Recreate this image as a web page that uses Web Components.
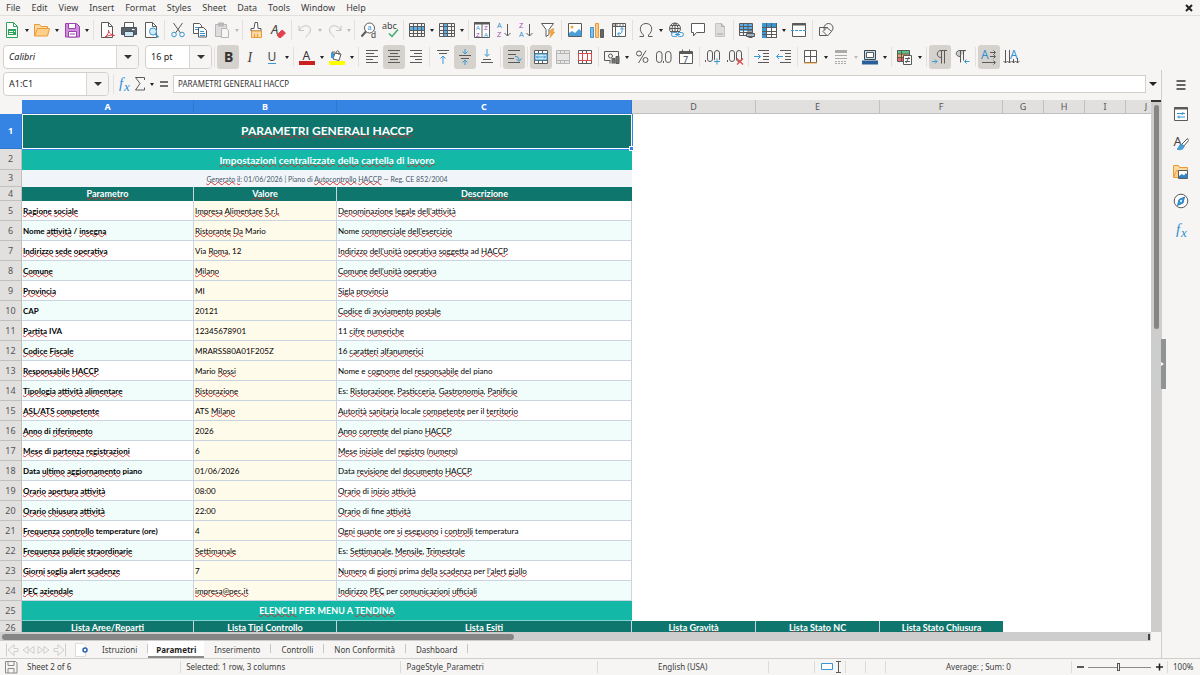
<!DOCTYPE html>
<html lang="it">
<head>
<meta charset="utf-8">
<title>Parametri HACCP</title>
<style>
  html, body { margin: 0; height: 100%; }
  body { font-family: "Noto Sans", sans-serif; font-size: 9px; color: #3d3d3d; background: #f6f5f4; overflow: hidden; }
</style>
</head>
<body>
<calc-window></calc-window>

<script>
/* ---------- icons (16 x 16) ---------- */
const T = (x, y, s, c, t, extra = '') => `<text x="${x}" y="${y}" font-size="${s}" fill="${c}" stroke="none" ${extra}>${t}</text>`;
const SANS = 'font-family="Liberation Sans"';
const GRID = '<path d="M.5 1.5h15v13h-15zM.5 4.5h15M.5 8.5h15M.5 11.5h15M4.5 1.5v13M8.5 1.5v13M12.5 1.5v13"/>';
const BLUE = '#2f8fd0';
const ICONS = {
  new: '<path d="M2.5.5h7l4 4v11h-11z" fill="#fff" stroke="#2fa35b"/><path d="M9.5.5v4h4" stroke="#2fa35b"/><path d="M4 7h8v6h-8z" fill="#2fa35b" stroke="none"/><path d="M5 9.5h4M5 11.5h4M10 9.5h1" stroke="#fff"/>',
  open: '<path d="M.5 13.5v-11h5l1.500 2h6.500v3" fill="#fbd9a3" stroke="#eb9b35"/><path d="M.5 14l3-7.500h12l-2 7.500z" fill="#fdcf8b" stroke="#eb9b35"/>',
  save: '<path d="M1.500 1.500h11l3 3v10.500h-14z" fill="#cf8ddb" stroke="#9b44b0"/><path d="M4.500 1.500h7v5h-7zM4.500 9.500h8v5.500h-8z" fill="#fff" stroke="#9b44b0"/><path d="M6 12h5" stroke="#9b44b0"/>',
  pdf: '<path d="M2.500.5h7l4 4v11h-11z" fill="#fff"/><path d="M9.500.5v4h4"/><path d="M6 15c3-2 4-5 3.500-7 0 3 3 5 6 5.500-3-1-6 0-9.500 1.500z" stroke="#dc3b4a"/>',
  print: '<path d="M3.500.5h9v5h-9z" fill="#fff"/><path d="M.5 5.500h15v7h-15z" fill="#58636e" stroke="#4a545e"/><path d="M3.500 9.500h9v5h-9z" fill="#cfe6f6" stroke="#4a545e"/><path d="M11 7.500h2.500" stroke="#fff"/>',
  preview: '<path d="M2.500.5h7l4 4v11h-11z" fill="#fff"/><path d="M9.500.5v4h4"/><circle cx="10" cy="9.500" r="3.500" fill="#d4ebfa" stroke="#3b97d3"/><path d="M12.500 12l3 3.500" stroke="#3b97d3" stroke-width="1.500"/>',
  cut: '<path d="M3.500 1l7 10M12.500 1l-7 10"/><circle cx="4" cy="12.500" r="2.300" stroke="#3b97d3"/><circle cx="12" cy="12.500" r="2.300" stroke="#3b97d3"/>',
  copy: '<path d="M1.500 1.500h6l2 2v8h-8z" fill="#fff"/><path d="M3 5.500h4M3 7.500h3" stroke="#3b97d3"/><path d="M6.500 5.500h5l3 3v6.500h-8z" fill="#fff"/><path d="M8 9.500h4M8 11.500h5M8 13.500h5" stroke="#3b97d3"/>',
  paste: '<path d="M1.500 2.500h11v12h-11z" fill="#ddd" stroke="#b5b5b5"/><path d="M4.500 1h5v3h-5z" fill="#bbb" stroke="#b5b5b5"/><path d="M7.500 6.500h5l2 2v7h-7z" fill="#f6f5f4" stroke="#b5b5b5"/>',
  clone: '<path d="M7 .5h2.500l.5 6h3v2.500h-10v-2.500h3z" fill="#fff"/><path d="M3.500 9v6.500h10v-6.500z" fill="#fbd9a3" stroke="#eb9b35"/><path d="M6.500 12v3M9.500 12v3" stroke="#eb9b35"/>',
  clear: T(1, 12, 13, '#444', 'A', 'font-style="italic"') + '<path d="M7 13l5-5 3.500 3-4.500 4.500h-2z" fill="#e0434f" stroke="#e0434f"/>',
  undo: '<path d="M2 3.500v5h5M2.500 8c3-6 11-5.500 11 0 0 3-3 5-5 7" stroke="#c4c4c4"/>',
  redo: '<path d="M15 3.500v5h-5M14.500 8c-3-6-11-5.500-11 0 0 3 3 5 5 7" stroke="#c4c4c4"/>',
  find: '<circle cx="9.500" cy="6" r="5" fill="#fff"/><path d="M6 9.500l-4.500 5" stroke-width="2"/>' + T(7.500, 7.500, 7, BLUE, 'a', SANS) + T(11, 15.500, 9, '#444', 'd', SANS),
  spell: T(0, 7, 9, '#444', 'abc') + '<path d="M7 11.500l3 3 6-7" stroke="#3bab6a" stroke-width="1.500"/>',
  row: '<path d="M1 5h14v4h-14z" fill="#5ab0ea" stroke="none"/>' + GRID,
  col: '<path d="M5 2h4v12h-4z" fill="#5ab0ea" stroke="none"/>' + GRID,
  sort: '<path d="M.5.5h15v15h-15zM8 1v15" fill="#fff"/><path d="M0 1.500h16" stroke-width="2"/>' + T(2, 8, 6, BLUE, 'A', SANS) + T(2, 15, 6, '#a347ba', 'Z', SANS) + T(10, 8, 6, '#a347ba', 'Z', SANS) + T(10, 15, 6, BLUE, 'A', SANS),
  asc: T(1, 6, 7, BLUE, 'A', SANS) + T(1, 15, 7, '#a347ba', 'Z', SANS) + '<path d="M11.500 2v12M8.500 11l3 3 3-3"/>',
  desc: T(1, 6, 7, '#a347ba', 'Z', SANS) + T(1, 15, 7, BLUE, 'A', SANS) + '<path d="M11.500 2v12M8.500 11l3 3 3-3"/>',
  filter: '<path d="M1.500 1.500h12l-4.500 6v5l-3 2v-7z" fill="#fff"/><path d="M12 7l-3 4h2.500l-1.500 4.500 4.500-5.500h-2.500l2-3z" fill="#f5a545" stroke="#eb9b35"/>',
  image: '<path d="M1.500 1.500h13v13h-13z" fill="#fff"/><path d="M2 14v-3l3-2 3 2 4-4 2.500 2.500v4.500z" fill="#4a9fdb" stroke="none"/><circle cx="5" cy="5" r="1.500" fill="#f5a545" stroke="none"/>',
  chart: '<path d="M1.500 5.500h3v10h-3z" fill="#83bfe9" stroke="#3b97d3"/><path d="M6.500 1.500h3v14h-3z" fill="#fbc887" stroke="#eb9b35"/><path d="M11.500 7.500h3v8h-3z" fill="#666"/>',
  pivot: '<path d="M1.500 1.500h13v13h-13zM1.500 4.500h13M4.500 1.500v13" fill="#fff"/><path d="M2 3h12" stroke="#777" stroke-dasharray="2 1"/><path d="M11 6v3c0 2-1 3-4 3M9.500 7.500l1.500-2 2 2M8.500 10l-2 2 2 2" stroke="#3b97d3"/>',
  omega: '<path d="M1.500 14.500h4v-1.500c-5-4-4-11.500 2.500-11.500s7.500 7.500 2.500 11.500v1.500h4"/>',
  link: '<circle cx="7" cy="6.500" r="5.500"/><path d="M1.500 6.500h11M7 1v11M3 3.500h8M3 9.500h8M7 1c-4 4-4 7 0 11M7 1c4 4 4 7 0 11"/><rect x="3.500" y="10.500" width="6" height="4" rx="2" stroke="#3b97d3" fill="#f6f5f4"/><rect x="9.500" y="10.500" width="6" height="4" rx="2" stroke="#3b97d3" fill="#f6f5f4"/><path d="M7 12.500h5" stroke="#3b97d3"/>',
  comment: '<path d="M1.500 1.500h13v9h-8l-3 3.500v-3.500h-2z" fill="#fff"/>',
  header: '<path d="M3.500 1.500h6l3 3v10h-9z" fill="#ddd" stroke="#c4c4c4"/><path d="M9.500 1.500v3h3M5 12h6" stroke="#aaa"/>',
  parea: '<path d="M1 2h12v7h-12z" fill="#5ab0ea" stroke="none"/><path d="M.5 1.500h13v12h-13zM.5 4.500h13M.5 7.500h13M.5 10.500h13M4.500 1.500v12M9 1.500v12"/><path d="M7.500 11.500h8v3h-8z" fill="#9cb4c6"/><path d="M9.500 9h4v2M9.500 15.500h4" />',
  freeze: '<path d="M1.500 1.500h14v14h-14z" fill="#fff"/><path d="M1 1h4v15h-4zM1 1h14v4h-14z" fill="#3b97d3" stroke="none"/><path d="M5.500 1v15M10.500 1v15M1 5.500h14M1 9.500h14M1 12.500h14M15.500 1v15"/>',
  split: '<path d="M1.500 1.500h13v13h-13z" fill="#fff"/><path d="M1 2.500h14" stroke-width="2"/><path d="M0 8.500h16" stroke="#3b97d3" stroke-dasharray="3 1"/>',
  shapes: '<path d="M1.500 5.500h8v8h-8z"/><circle cx="10.500" cy="6" r="4.500"/><path d="M5 9.500l4-4 4.500 4-4 4.500z" fill="#f6f5f4"/>',
  bold: T(4, 13, 14, '#333', 'B', 'font-weight="700"'),
  italic: T(5.500, 13, 14, '#444', 'I', 'font-style="italic" font-family="Liberation Serif"'),
  underline: T(3.500, 12, 12, '#444', 'U') + '<path d="M4 14.500h8" stroke="#3b97d3"/>',
  color: T(3.500, 10.500, 12, '#333', 'A') + '<path d="M0 14h16" stroke="#c9211e" stroke-width="4"/>',
  mark: '<path d="M6 4l6 1-2 6.500-6-1.500z" fill="#fff"/><path d="M7 5c0-5 4-4 3 1M3 9v-6h3" /><path d="M2 4h3v5h-3z" fill="#3b97d3" stroke="none"/><path d="M0 14h16" stroke="#ff0" stroke-width="4"/>',
  left: '<path d="M2 1.500h12M2 4.500h8M2 7.500h12M2 10.500h7M2 13.500h12"/>',
  center: '<path d="M2 1.500h12M4 4.500h8M2 7.500h12M4 10.500h8M2 13.500h12"/>',
  right: '<path d="M2 1.500h12M6 4.500h8M2 7.500h12M7 10.500h7M2 13.500h12"/>',
  top: '<path d="M2 1.500h12M4 4.500h8"/><path d="M8 15v-8M5.500 9.500l2.500-2.500 2.500 2.500" stroke="#3b97d3"/>',
  middle: '<path d="M2 6.500h12M4 9.500h8"/><path d="M8 0v4.500M5.500 2.500l2.500 2.500 2.500-2.500M8 16v-4.500M5.500 13.500l2.500-2.500 2.500 2.500" stroke="#3b97d3"/>',
  bottom: '<path d="M2 13.500h12M4 10.500h8"/><path d="M8 0v7M5.500 5l2.500 2.500 2.500-2.500" stroke="#3b97d3"/>',
  wrap: '<path d="M2 1.500h12M2 5.500h8M2 9.500h6M2 13.500h12"/><path d="M9 7.500c3 0 4 1 4 4M10.500 10l2.500 2.500 2.500-3" stroke="#3b97d3"/>',
  merge: '<path d="M1.500 1.500h13v13h-13zM1.500 4.500h13M1.500 11.500h13M5.500 1.500v3M9.500 1.500v3M5.500 11.500v3M9.500 11.500v3" fill="#fff"/><path d="M2 5h12v6h-12z" fill="#d5ebfa" stroke="#3b97d3"/><path d="M3.500 8h9M5 6.500l-1.500 1.500 1.500 1.500M11 6.500l1.500 1.500-1.500 1.500" stroke="#3b97d3"/>',
  mergecells: '<path d="M1.500 1.500h13v13h-13zM1.500 4.500h13M1.500 11.500h13M5.500 1.500v3M9.500 1.500v3M5.500 11.500v3M9.500 11.500v3" stroke="#b5b5b5" fill="#e6e6e6"/>',
  unmerge: '<path d="M1.500 1.500h13v13h-13zM1.500 4.500h13M1.500 11.500h13M5.500 1.500v3M9.500 1.500v3M5.500 11.500v3M9.500 11.500v3" fill="#fff"/><path d="M1.500 4.500h13v7h-13zM5.500 4.500v7M10.500 4.500v7" stroke="#e04848"/>',
  currency: '<path d="M14.500 7v-4.500h-14v9h6"/><circle cx="6.500" cy="7" r="2"/><path d="M6 14.500v-3M8 14.500v-5h3v5M12 14.500v-7h3v7z" fill="#777"/>',
  percent: '<circle cx="5" cy="4.500" r="2.500"/><circle cx="11.500" cy="11" r="2.500"/><path d="M12 1.500l-7.500 12.500"/>',
  number: '<rect x=".5" y="2.500" width="5.500" height="11" rx="2.700"/><rect x="9.500" y="2.500" width="5.500" height="11" rx="2.700"/><path d="M7.500 12v2"/>',
  date: '<path d="M1.500 2.500h13v12h-13zM4.500.5v3M11.500.5v3" fill="#fff"/><path d="M1.500 4h13" stroke-width="2"/>' + T(5, 13.500, 9, '#444', '7'),
  adddec: '<rect x="2.500" y="1.500" width="5" height="11" rx="2.500"/><rect x="9.500" y="1.500" width="5" height="11" rx="2.500"/><path d="M.5 11v2"/><path d="M12 9v7M9 12.500h6.500" stroke="#f6f5f4" stroke-width="3"/><path d="M12 9.500v6M9 12.500h6" stroke="#3b97d3"/>',
  deldec: '<rect x="2.500" y="1.500" width="5" height="11" rx="2.500"/><rect x="9.500" y="1.500" width="5" height="11" rx="2.500"/><path d="M.5 11v2"/><path d="M10 9.500l6 6M16 9.500l-6 6" stroke="#e04848" stroke-width="1.200"/>',
  indent: '<path d="M4 1.500h11M9 4.500h6M9 7.500h6M9 10.500h6M4 13.500h11"/><path d="M0 7.500h6M4 5l2.500 2.500-2.500 2.500" stroke="#3b97d3"/>',
  outdent: '<path d="M4 1.500h11M9 4.500h6M9 7.500h6M9 10.500h6M4 13.500h11"/><path d="M1 7.500h6M3 5l-2.500 2.500 2.500 2.500" stroke="#3b97d3"/>',
  borders: '<path d="M1.500 1.500h12v12h-12zM7.500 1.500v12M1.500 7.500h12" fill="#fff"/><path d="M1 14h13" stroke="#eb9b35"/>',
  bstyle: '<path d="M2 2.500h12" stroke="#aaa" stroke-width="3"/><path d="M2 6.500h12M2 9.500h12" stroke="#aaa"/><path d="M2 12.500h12M2 14.500h12" stroke="#aaa" stroke-dasharray="2 1"/>',
  bcolor: '<path d="M2.500 1.500h11v9h-11z" fill="#b9def6" stroke="#444"/><path d="M4.500 3.500h7v5h-7z" fill="#fff"/><path d="M0 13.500h16" stroke="#2a6099" stroke-width="4"/>',
  cond: '<path d="M.5 1.500h12v11h-12z" fill="#fff"/><path d="M1 2h11v3h-11z" fill="#57c584" stroke="none"/><path d="M1 5h11v3h-11z" fill="#f2a65a" stroke="none"/><path d="M1 8h11v4h-11z" fill="#e66" stroke="none"/><path d="M.5 1.500h12M.5 5h12M.5 8.500h12M4.500 1.500v11"/><path d="M6.500 6.500h8v9h-8z" fill="#fff"/><path d="M8 9.500h5M8 12.500h5M12 8l-3 6"/>',
  ltr: '<path d="M15 1.500h-6c-5 0-5 7 0 7M9.500 1.500v13M12.500 1.500v13"/><path d="M0 12.500h5M3 10.500l2 2-2 2" stroke="#3b97d3"/>',
  rtl: '<path d="M12 1.500h-6c-5 0-5 6 0 6M6.500 1.500v12M9.500 1.500v10" fill="#ccc"/><path d="M15.500 12.500h-5M12.500 10.500l-2 2 2 2" stroke="#3b97d3"/>',
  dirh: T(0, 10, 12, BLUE, 'A') + '<path d="M9 3.500h5M9 7.500h5M1 13.500h13M12.500 1.500l2 2-2 2M12.500 5.500l2 2-2 2M12.500 11.500l2 2-2 2"/>',
  dirv: T(7, 10, 12, BLUE, 'A') + '<path d="M2.500 1v13M6.500 1v13M14.500 9v5M10.500 10v4M.5 12l2 2 2-2M4.500 12l2 2 2-2M9 12l1.500 2 2-2M12.500 12l2 2 2-2"/>',
  fx: T(3, 12, 15, BLUE, 'f', 'font-style="italic" font-family="Liberation Serif"') + T(8, 14.500, 13, BLUE, 'x', 'font-style="italic" font-family="Liberation Serif"'),
  sum: '<path d="M12.500 4v-2.500h-9l4.500 6-4.500 6.500h9v-2.500"/>',
  equal: '<path d="M4 6h8M4 10h8" stroke="#444" stroke-width="1.500"/>',
  burger: '<path d="M3.500 4h9M3.500 8h9M3.500 12h9" stroke="#333" stroke-width="1.300"/>',
  props: '<path d="M1.500 1.500h13v13h-13z" fill="#fff"/><path d="M1 2.500h14" stroke-width="2"/><path d="M4 7.500h8M4 11h8M10 6l-1 3M6 9.500v3" stroke="#3b97d3"/>',
  styles: T(.5, 11, 13, '#444', 'A') + '<path d="M14.500 3.500l-6 6 2 2 5-6z" fill="#fff"/><path d="M9 9.500c-4 0-2 3-5 4.500 3 1.500 7 .5 7-3z" fill="#4a9fdb" stroke="#3b97d3"/>',
  gallery: '<path d="M.5 13.500v-12h5l1 2h8v3" fill="#fbd9a3" stroke="#eb9b35"/><path d="M.5 13.500l3-7h11v7z" fill="#fdcf8b" stroke="#eb9b35"/><path d="M5.500 6.500h9v8h-9z" fill="#fff"/><path d="M6 14v-2l3-2 2 1.500 2-2.500 1.500 2v3z" fill="#3584c4" stroke="none"/>',
  navigator: '<circle cx="8" cy="8" r="6.800" fill="#fff"/><path d="M11.500 4l-1.500 6-5.500 2.500 1.500-6z" fill="#3b97d3" stroke="#2f7fc0"/><circle cx="8" cy="8" r="1" fill="#fff" stroke="none"/>',
  addsheet: '<path d="M1.500 1.500h8l2 2v11h-10z" fill="#fff" stroke="#ddd"/><circle cx="11" cy="8" r="2" fill="#fff" stroke="#2a62b0" stroke-width="1.500"/>',
  disk: '<path d="M2.500 2.500h10l1.500 1.500v10h-11.500z" stroke="#8a8a8a"/><path d="M5 2.500h6v4h-6zM5 14v-4.500h6v4.500" stroke="#8a8a8a"/>',
  first: '<path d="M2.500 1.500v13M14 6.500h-4v-4l-6 5.500 6 5.500v-4h4z" stroke="#cfcdcb"/>',
  prev: '<path d="M8 4.500l-5 3.500 5 3.500zM14 4.500l-5 3.500 5 3.500z" stroke="#cfcdcb"/>',
  next: '<path d="M2 4.500l5 3.500-5 3.500zM8 4.500l5 3.500-5 3.500z" stroke="#cfcdcb"/>',
  last: '<path d="M13.500 1.500v13M2 6.500h4v-4l6 5.500-6 5.500v-4h-4z" stroke="#cfcdcb"/>',
  close: '<path d="M5 5l6 6M11 5l-6 6" stroke="#222" stroke-width="2"/>',
  minus: '<path d="M5 8h7" stroke="#222" stroke-width="1.500"/>',
  plus: '<path d="M5 8h7M8.500 4.500v7" stroke="#222" stroke-width="1.500"/>',
  selmode: '<path d="M4.500 4.500h11v6h-11z" fill="#fff" stroke="#3b97d3"/>',
  ibeam: '<path d="M3 2.500h5M5.500 2.500v11M3 13.500h5"/>'
};

const define = (tag, html, setup) => {
  const tpl = document.createElement('template');
  tpl.innerHTML = html;
  customElements.define(tag, class extends HTMLElement {
    connectedCallback() {
      if (this.shadowRoot) return;
      this.attachShadow({ mode: 'open' }).append(tpl.content.cloneNode(true));
      if (setup) setup(this, this.shadowRoot);
    }
  });
};

define('ui-icon', `
<style>
  :host { display: block; width: 16px; height: 16px; flex: none; }
  svg { display: block; width: 16px; height: 16px; overflow: visible; }
</style>
<svg viewBox="0 0 16 16" fill="none" stroke="#5a5a5a" stroke-width="1" font-family="Noto Sans" aria-hidden="true"></svg>`,
(el, root) => { root.querySelector('svg').innerHTML = ICONS[el.getAttribute('name')] || ''; });

/* toolbar button, optionally with a drop-down arrow beside it */
define('tool-button', `
<style>
  :host { display: flex; flex: none; align-items: center; }
  button { border: 0; background: none; padding: 0; height: 24px; display: flex; align-items: center; justify-content: center; border-radius: 3px; }
  .main { width: var(--button-width, 22px); }
  :host([pressed]) .main { background: #d5d1cd; }
  .more { width: 8px; }
  :host([dim]) .more { width: 7px; }
  :host(:not([menu])) .more { display: none; }
  .more::before { content: ""; border: solid transparent; border-width: 3px 2px 0; border-top-color: #222; margin-top: 2px; }
  :host([dim]) .more::before { border-top-color: #bbb; }
</style>
<button class="main" type="button"></button><button class="more" type="button"></button>`,
(el, root) => {
  const [main, more] = root.querySelectorAll('button');
  const icon = document.createElement('ui-icon');
  icon.setAttribute('name', el.getAttribute('icon'));
  main.append(icon);
  main.setAttribute('aria-label', el.getAttribute('icon'));
  more.setAttribute('aria-label', el.getAttribute('icon') + ' options');
  if (el.hasAttribute('pressed')) main.setAttribute('aria-pressed', 'true');
  main.disabled = more.disabled = el.hasAttribute('dim');
});

define('tool-separator', `
<style>
  :host { display: block; flex: none; width: 1px; height: 20px; margin: 0 2px; background: #e3e1de; }
</style>`);

/* items: "name" plain, "name+" with menu, "name!" pressed, "name-" disabled, "|" separator */
define('tool-bar', `
<style>
  :host { display: flex; align-items: center; height: 27px; padding-left: 1px; }
  .items { display: flex; align-items: center; }
</style>
<slot></slot><div class="items" role="toolbar"></div>`,
(el, root) => {
  const box = root.querySelector('.items');
  box.setAttribute('aria-label', el.getAttribute('label'));
  box.innerHTML = el.getAttribute('items').split(' ').map(i => {
    if (i === '|') return '<tool-separator></tool-separator>';
    const name = i.replace(/[^a-z]/g, '');
    return `<tool-button icon="${name}"${i.includes('+') ? ' menu' : ''}${i.includes('!') ? ' pressed' : ''}${i.includes('-') ? ' dim' : ''}></tool-button>`;
  }).join('');
});

define('combo-box', `
<style>
  :host { display: flex; flex: none; box-sizing: border-box; height: 24px; border: 1px solid #d3cfcb; border-radius: 4px; background: #fff; overflow: hidden; }
  input { flex: 1; min-width: 0; border: 0; padding: 0 5px; background: none; font: inherit; color: #222; outline: 0; }
  button { width: 22px; border: 0; border-left: 1px solid #d9d6d3; background: #f6f5f4; padding: 0; display: flex; align-items: center; justify-content: center; }
  button::before { content: ""; border: solid transparent; border-width: 4px 4px 0; border-top-color: #333; }
</style>
<input type="text"><button type="button" aria-label="Open list"></button>`,
(el, root) => {
  const input = root.querySelector('input');
  input.value = el.getAttribute('value');
  input.setAttribute('aria-label', el.getAttribute('label'));
});

define('menu-bar', `
<style>
  :host { display: flex; align-items: center; height: 16px; box-sizing: border-box; padding: 1px 3px 0 6px; border-bottom: 1px solid #e2e0dd; }
  nav { display: flex; gap: 11px; flex: 1; }
  button { border: 0; background: none; padding: 0; font: inherit; line-height: 14px; color: inherit; }
</style>
<nav aria-label="Menu"></nav><button type="button" aria-label="Close"><ui-icon name="close"></ui-icon></button>`,
(el, root) => {
  root.querySelector('nav').innerHTML = 'File Edit View Insert Format Styles Sheet Data Tools Window Help'
    .split(' ').map(t => `<button type="button">${t}</button>`).join('');
});

define('formula-bar', `
<style>
  :host { display: flex; align-items: center; height: 27px; padding: 0 4px 3px 3px; --button-width: 16px; }
  combo-box { width: 106px; margin-right: 4px; }
  .line { flex: 1; min-width: 0; height: 18px; box-sizing: border-box; border: 1px solid #d3cfcb; padding: 0 4px; margin-left: 1px; background: #fff; font: inherit; font-size: 8px; color: #333; outline: 0; }
  .expand { width: 11px; border: 0; background: none; padding: 0; display: flex; justify-content: flex-end; }
  .expand::before { content: ""; border: solid transparent; border-width: 4px 4px 0; border-top-color: #222; }
  tool-separator { margin: 0 2px 0 0; }
</style>
<combo-box value="A1:C1" label="Name Box"></combo-box><tool-separator></tool-separator>
<tool-button icon="fx"></tool-button><tool-button icon="sum" menu></tool-button><tool-button icon="equal"></tool-button>
<input class="line" type="text" aria-label="Input line" value="PARAMETRI GENERALI HACCP"><button class="expand" type="button" aria-label="Expand formula bar"></button>`);

/* ---------- sheet ---------- */
/* words in [brackets] are flagged by the spelling checker */
const ROWS = [
  ['[Ragione] [sociale]', '[Impresa] [Alimentare] [S.r.l.]', '[Denominazione] [legale] [dell’attività]'],
  ['Nome [attività] / [insegna]', '[Ristorante] [Da] Mario', 'Nome [commerciale] [dell’esercizio]'],
  ['[Indirizzo] [sede] [operativa]', 'Via [Roma], 12', '[Indirizzo] [dell’unità] [operativa] [soggetta] ad [HACCP]'],
  ['[Comune]', '[Milano]', '[Comune] [dell’unità] [operativa]'],
  ['[Provincia]', 'MI', '[Sigla] [provincia]'],
  ['CAP', '20121', '[Codice] di [avviamento] [postale]'],
  ['[Partita] IVA', '12345678901', '11 [cifre] [numeriche]'],
  ['[Codice] [Fiscale]', 'MRARSS80A01F205Z', '16 [caratteri] [alfanumerici]'],
  ['[Responsabile] [HACCP]', 'Mario [Rossi]', 'Nome e [cognome] del [responsabile] del piano'],
  ['[Tipologia] [attività] [alimentare]', '[Ristorazione]', 'Es: [Ristorazione], [Pasticceria], [Gastronomia], [Panificio]'],
  ['[ASL/ATS] [competente]', 'ATS [Milano]', '[Autorità] [sanitaria] locale [competente] per il [territorio]'],
  ['[Anno] di [riferimento]', '2026', '[Anno] [corrente] del piano [HACCP]'],
  ['[Mese] di [partenza] [registrazioni]', '6', '[Mese] [iniziale] del [registro] ([numero])'],
  ['Data [ultimo] [aggiornamento] piano', '01/06/2026', 'Data [revisione] del [documento] [HACCP]'],
  ['[Orario] [apertura] [attività]', '08:00', '[Orario] di [inizio] [attività]'],
  ['[Orario] [chiusura] [attività]', '22:00', '[Orario] di fine [attività]'],
  ['[Frequenza] [controllo] temperature (ore)', '4', '[Ogni] [quante] ore [si] [eseguono] i [controlli] temperatura'],
  ['[Frequenza] [pulizie] [straordinarie]', '[Settimanale]', 'Es: [Settimanale], [Mensile], [Trimestrale]'],
  ['[Giorni] [soglia] alert [scadenze]', '7', '[Numero] di [giorni] prima [della] [scadenza] per [l’alert] [giallo]'],
  ['[PEC] [aziendale]', '[impresa@pec.it]', '[Indirizzo] [PEC] per [comunicazioni] [ufficiali]']
];
const spell = s => s.replace(/\[([^\]]+)\]/g, '<u>$1</u>');

define('sheet-grid', `
<style>
  :host { display: block; flex: 1; min-width: 0; overflow: hidden; background: #fff; position: relative; }
  table { table-layout: fixed; width: 1167px; border-collapse: separate; border-spacing: 0; font: 8px/12px Lato, sans-serif; color: #000; }
  th, td { box-sizing: border-box; padding: 0; text-align: left; font-weight: 400; white-space: nowrap; overflow: hidden; }
  .h th { height: 14px; text-align: center; background: #e1e0df; border-right: 1px solid #c2bfbc; border-bottom: 1px solid #c2bfbc; font: 9px/12px "Noto Sans", sans-serif; color: #555; }
  .h .on, .n.on { background: #3584e4; color: #fff; font-weight: 700; border-color: #2f78d0; }
  .h th:first-child { background: #f6f5f4; border-color: #f6f5f4; }
  .n { text-align: center; background: #e1e0df; border-right: 1px solid #c2bfbc; border-bottom: 1px solid #c2bfbc; font: 9px/12px "Noto Sans", sans-serif; color: #555; }
  u { text-decoration: underline wavy #d0302c 1px; text-decoration-skip-ink: none; text-underline-offset: -1px; }
  .title { position: relative; overflow: visible; text-align: center; background: #0f766e; color: #fff; font: 700 12px/20px Lato, sans-serif; border: 1px solid #fff; box-shadow: 0 1px #3584e4, 1px 0 #3584e4; padding-bottom: 2px; }
  .title::after { content: ""; position: absolute; right: -3px; bottom: -3px; width: 3px; height: 3px; background: #3584e4; border: 1px solid #fff; }
  .sub, .list { text-align: center; background: #14b8a6; color: #fff; font-weight: 700; }
  .sub { font-size: 10px; }
  .list { font-size: 9px; border-bottom: 1px solid #7fd6cc; }
  .gen { text-align: center; background: #f1f5f9; color: #475569; font-size: 7px; }
  .hd { text-align: center; background: #0f766e; color: #fff; font: 700 9px/12px Lato, sans-serif; border-right: 1px solid #cbd5e1; }
  .hd.last { border-right: 0; }
  .r > :not(.n) { border-right: 1px solid #cbd5e1; border-bottom: 1px solid #cbd5e1; padding-left: 1px; }
  .k { font-weight: 700; }
  .alt > .k, .alt > .d { background: #f0fdfa; }
  .v { background: #fffbeb; }
</style>
<table aria-label="Parametri"><colgroup>
<col style="width:22px"><col style="width:172px"><col style="width:143px"><col style="width:295px"><col style="width:124px"><col style="width:124px"><col style="width:123px"><col style="width:41px"><col style="width:41px"><col style="width:41px"><col style="width:41px">
</colgroup><thead></thead><tbody></tbody></table>`,
(el, root) => {
  const row = (n, h, cells, cls = '') => `<tr class="${cls}" style="height:${h}px"><th scope="row" class="n${n === 1 ? ' on' : ''}">${n}</th>${cells}</tr>`;
  const heads = a => a.map((t, i) => `<th scope="col" class="hd${i === a.length - 1 ? ' last' : ''}">${spell(t)}</th>`).join('');
  root.querySelector('thead').innerHTML = '<tr class="h"><th></th>' +
    [...'ABCDEFGHIJ'].map((c, i) => `<th scope="col"${i < 3 ? ' class="on"' : ''}>${c}</th>`).join('') + '</tr>';
  root.querySelector('tbody').innerHTML =
    row(1, 35, '<td colspan="3" class="title"><u>PARAMETRI</u> <u>GENERALI</u> <u>HACCP</u></td>') +
    row(2, 21, `<td colspan="3" class="sub">${spell('[Impostazioni] [centralizzate] [della] [cartella] di [lavoro]')}</td>`) +
    row(3, 17, `<td colspan="3" class="gen">${spell('[Generato] [il]: 01/06/2026 | Piano di [Autocontrollo] [HACCP] — Reg. CE 852/2004')}</td>`) +
    row(4, 14, heads(['[Parametro]', '[Valore]', '[Descrizione]'])) +
    ROWS.map((r, i) => row(i + 5, 20, `<td class="k">${spell(r[0])}</td><td class="v">${spell(r[1])}</td><td class="d">${spell(r[2])}</td>`, 'r' + (i % 2 ? ' alt' : ''))).join('') +
    row(25, 20, `<td colspan="3" class="list">${spell('[ELENCHI] PER MENU A [TENDINA]')}</td>`) +
    row(26, 14, heads(['[Lista] [Aree/Reparti]', '[Lista] [Tipi] [Controllo]', '[Lista] [Esiti]', '[Lista] [Gravità]', '[Lista] [Stato] NC', '[Lista] [Stato] [Chiusura]']));
});

define('scroll-bar', `
<style>
  :host { display: flex; flex: none; background: #cdcdcd; box-sizing: border-box; }
  :host([vertical]) { width: 10px; flex-direction: column; padding: 3px 2px 0 3px; border-top: 2px solid #333; }
  :host([horizontal]) { height: 9px; padding: 2px 1px 1px 2px; }
  .thumb { border-radius: 3px; background: #858585; }
  :host([vertical]) .thumb { flex: 224; }
  :host([vertical]) .rest { flex: 303; }
  :host([horizontal]) .thumb { flex: 512; }
  :host([horizontal]) .rest { flex: 634; }
  .mark { width: 2px; background: #444; }
  :host([vertical]) .mark { display: none; }
</style><div class="thumb"></div><div class="rest"></div><div class="mark"></div>`);

define('sheet-tabs', `
<style>
  :host { display: flex; height: 17px; align-items: stretch; padding-left: 4px; font-size: 8px; }
  .nav { display: flex; align-items: center; }
  .nav button { width: 16px; }
  .nav .add { width: 20px; margin-left: 4px; }
  button { border: 0; background: none; padding: 0; font: inherit; color: inherit; display: flex; align-items: center; justify-content: center; }
  .tabs { display: flex; }
  .tabs button { padding: 0 10px; border-right: 1px solid #d0cdca; border-image: linear-gradient(#0000 4px, #c8c5c2 4px 12px, #0000 12px) 1; border-width: 0 1px 0 0; border-style: solid; }
  .tabs button[aria-selected=true] { background: #fff; font-weight: 700; padding: 2px 8px 0; color: #222; border-image: none; border-width: 0 0 2px; border-color: #8b8b8b; }
</style>
<div class="nav">
<button type="button" aria-label="First sheet"><ui-icon name="first"></ui-icon></button><button type="button" aria-label="Previous sheet"><ui-icon name="prev"></ui-icon></button><button type="button" aria-label="Next sheet"><ui-icon name="next"></ui-icon></button><button type="button" aria-label="Last sheet"><ui-icon name="last"></ui-icon></button><button class="add" type="button" aria-label="Add sheet"><ui-icon name="addsheet"></ui-icon></button>
</div><div class="tabs" role="tablist"></div>`,
(el, root) => {
  root.querySelector('.tabs').innerHTML = ['Istruzioni', 'Parametri', 'Inserimento', 'Controlli', 'Non Conformità', 'Dashboard']
    .map(t => `<button type="button" role="tab" aria-selected="${t === 'Parametri'}">${t}</button>`).join('');
});

define('side-bar', `
<style>
  :host { display: flex; flex-direction: column; align-items: center; flex: none; width: 39px; border-left: 1px solid #d0cdca; position: relative; padding-top: 3px; box-sizing: border-box; }
  tool-button { height: 24px; margin-bottom: 5px; }
  .grip { position: absolute; left: -1px; top: calc(50% - 25px); width: 5px; height: 50px; border: 0; padding: 0; background: #909394; display: flex; align-items: center; }
  .grip::before { content: ""; border: solid transparent; border-width: 2px 0 2px 3px; border-left-color: #fff; }
</style>
<tool-button icon="burger"></tool-button><tool-button icon="props"></tool-button><tool-button icon="styles"></tool-button><tool-button icon="gallery"></tool-button><tool-button icon="navigator"></tool-button><tool-button icon="fx"></tool-button>
<button class="grip" type="button" aria-label="Hide sidebar"></button>`);

define('status-bar', `
<style>
  :host { display: grid; grid-template-columns: 22px 159fr 220fr 196fr 171fr 46fr 31px 20px 20px 186fr 96px 32px; height: 16px; border-top: 1px solid #d0cdca; align-items: center; font-size: 8px; }
  :host > * { box-sizing: border-box; }
  span, div { height: 12px; line-height: 12px; border-right: 1px solid #dddad7; white-space: nowrap; }
  span { padding-left: 5px; }
  .c { text-align: center; padding: 0; }
  div { display: flex; align-items: center; justify-content: center; }
  .end { border: 0; }
  button { border: 0; background: none; padding: 0; }
  .beam { width: 10px; }
  input { appearance: none; flex: 1; min-width: 0; height: 12px; margin: 0; background: linear-gradient(#8b8b8b, #8b8b8b) center / 100% 1px no-repeat; }
  input::-webkit-slider-thumb { appearance: none; width: 3px; height: 8px; border: 1px solid #555; background: #f6f5f4; box-sizing: border-box; }
</style>
<div class="end"><ui-icon name="disk"></ui-icon></div>
<span>Sheet 2 of 6</span><span>Selected: 1 row, 3 columns</span><span>PageStyle_Parametri</span><span class="c">English (USA)</span><span></span>
<div><ui-icon name="selmode"></ui-icon><ui-icon name="ibeam" class="beam"></ui-icon></div><span></span><span></span><span class="c">Average: ; Sum: 0</span>
<div><button type="button" aria-label="Zoom out"><ui-icon name="minus"></ui-icon></button><input type="range" aria-label="Zoom" min="0" max="200" value="96"><button type="button" aria-label="Zoom in"><ui-icon name="plus"></ui-icon></button></div>
<span class="end">100%</span>`);

define('calc-window', `
<style>
  :host { display: flex; flex-direction: column; height: 100vh; }
  .work { flex: 1; min-height: 0; display: flex; }
  main { flex: 1; min-width: 0; display: flex; flex-direction: column; }
  .sheet { flex: 1; min-height: 0; display: flex; }
  .font { width: 136px; margin: 0 6px 0 2px; font-style: italic; }
  .size { width: 67px; }
  scroll-bar[horizontal] { margin-right: 10px; }
</style>
<menu-bar></menu-bar>
<tool-bar label="Standard" items="new+ open+ save+ | pdf print preview | cut copy paste+- | clone clear | undo+- redo+- | find spell | row+ col+ | sort asc desc filter | image chart pivot | omega+ link comment header- | parea freeze+ split | shapes"></tool-bar>
<tool-bar label="Formatting" items="| bold! italic underline+ | color+ mark+ | left center! right | top middle! bottom | wrap! | merge! mergecells- unmerge | currency+ percent number date | adddec deldec | indent outdent | borders+ bstyle+- bcolor+ | cond+ | ltr! rtl | dirh! dirv">
  <combo-box class="font" value="Calibri" label="Font Name"></combo-box><combo-box class="size" value="16 pt" label="Font Size"></combo-box>
</tool-bar>
<div class="work">
  <main>
    <formula-bar></formula-bar>
    <div class="sheet"><sheet-grid></sheet-grid><scroll-bar vertical></scroll-bar></div>
    <scroll-bar horizontal></scroll-bar>
    <sheet-tabs></sheet-tabs>
  </main>
  <side-bar></side-bar>
</div>
<status-bar></status-bar>`);
</script>
</body>
</html>
